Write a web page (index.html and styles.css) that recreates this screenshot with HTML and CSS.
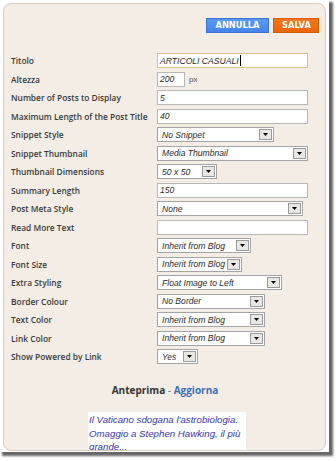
FILE: index.html
```html
<!DOCTYPE html>
<html>
<head>
<meta charset="utf-8">
<link rel="stylesheet" href="styles.css">
</head>
<body>
<div class="shot">
  <div class="panel">
    <div class="actions">
      <button class="btn btn-blue">ANNULLA</button>
      <button class="btn btn-orange">SALVA</button>
    </div>
    <div class="form">
      <label class="lbl">Titolo</label>
      <div class="ctl"><span class="input w-full focus">ARTICOLI CASUALI<span class="caret"></span></span></div>

      <label class="lbl">Altezza</label>
      <div class="ctl"><span class="input w-28">200</span><span class="unit">px</span></div>

      <label class="lbl">Number of Posts to Display</label>
      <div class="ctl"><span class="input w-full">5</span></div>

      <label class="lbl">Maximum Length of the Post Title</label>
      <div class="ctl"><span class="input w-full">40</span></div>

      <label class="lbl">Snippet Style</label>
      <div class="ctl"><span class="select w-117"><span class="val">No Snippet</span><span class="drop"><svg width="5" height="3" viewBox="0 0 5 3"><path d="M0 0H5L2.5 3Z" fill="#000"/></svg></span></span></div>

      <label class="lbl">Snippet Thumbnail</label>
      <div class="ctl"><span class="select w-full"><span class="val">Media Thumbnail</span><span class="drop"><svg width="5" height="3" viewBox="0 0 5 3"><path d="M0 0H5L2.5 3Z" fill="#000"/></svg></span></span></div>

      <label class="lbl">Thumbnail Dimensions</label>
      <div class="ctl"><span class="select w-60"><span class="val">50 x 50</span><span class="drop"><svg width="5" height="3" viewBox="0 0 5 3"><path d="M0 0H5L2.5 3Z" fill="#000"/></svg></span></span></div>

      <label class="lbl">Summary Length</label>
      <div class="ctl"><span class="input w-full">150</span></div>

      <label class="lbl">Post Meta Style</label>
      <div class="ctl"><span class="select w-146"><span class="val">None</span><span class="drop"><svg width="5" height="3" viewBox="0 0 5 3"><path d="M0 0H5L2.5 3Z" fill="#000"/></svg></span></span></div>

      <label class="lbl">Read More Text</label>
      <div class="ctl"><span class="input w-full"></span></div>

      <label class="lbl">Font</label>
      <div class="ctl"><span class="select w-94"><span class="val">Inherit from Blog</span><span class="drop"><svg width="5" height="3" viewBox="0 0 5 3"><path d="M0 0H5L2.5 3Z" fill="#000"/></svg></span></span></div>

      <label class="lbl">Font Size</label>
      <div class="ctl"><span class="select w-85"><span class="val">Inherit from Blog</span><span class="drop"><svg width="5" height="3" viewBox="0 0 5 3"><path d="M0 0H5L2.5 3Z" fill="#000"/></svg></span></span></div>

      <label class="lbl">Extra Styling</label>
      <div class="ctl"><span class="select w-125"><span class="val">Float Image to Left</span><span class="drop"><svg width="5" height="3" viewBox="0 0 5 3"><path d="M0 0H5L2.5 3Z" fill="#000"/></svg></span></span></div>

      <label class="lbl">Border Colour</label>
      <div class="ctl"><span class="select w-108"><span class="val">No Border</span><span class="drop"><svg width="5" height="3" viewBox="0 0 5 3"><path d="M0 0H5L2.5 3Z" fill="#000"/></svg></span></span></div>

      <label class="lbl">Text Color</label>
      <div class="ctl"><span class="select w-108"><span class="val">Inherit from Blog</span><span class="drop"><svg width="5" height="3" viewBox="0 0 5 3"><path d="M0 0H5L2.5 3Z" fill="#000"/></svg></span></span></div>

      <label class="lbl">Link Color</label>
      <div class="ctl"><span class="select w-108"><span class="val">Inherit from Blog</span><span class="drop"><svg width="5" height="3" viewBox="0 0 5 3"><path d="M0 0H5L2.5 3Z" fill="#000"/></svg></span></span></div>

      <label class="lbl">Show Powered by Link</label>
      <div class="ctl"><span class="select w-41"><span class="val">Yes</span><span class="drop"><svg width="5" height="3" viewBox="0 0 5 3"><path d="M0 0H5L2.5 3Z" fill="#000"/></svg></span></span></div>
    </div>

    <div class="preview-head"><span class="ph-title">Anteprima</span><span class="ph-sep"> - </span><a class="ph-link">Aggiorna</a></div>
    <div class="preview">
      <p class="preview-text">Il Vaticano sdogana l'astrobiologia. Omaggio a Stephen Hawking, il più grande...</p>
    </div>
  </div>
</div>
</body>
</html>
```

FILE: styles.css
```css
* { box-sizing: border-box; margin: 0; padding: 0; }
html, body { background: #ffffff; }
body {
  width: 336px;
  height: 461px;
  overflow: hidden;
  font-family: "Open Sans", "DejaVu Sans", sans-serif;
}

.shot {
  width: 329px;
  height: 452px;
  background: #ffffff;
  padding: 3px 3px 1px 3px;
  box-shadow: 3px 3px 2px 1px rgba(0, 0, 0, 0.6);
}

.panel {
  height: 100%;
  background: #f4ede5;
  border: 1px solid #d6cec2;
  border-radius: 8px;
  overflow: hidden;
  padding: 14px 6px 0 7px;
}

.actions {
  display: flex;
  justify-content: flex-end;
  gap: 4px;
  height: 15px;
}

.btn {
  height: 15px;
  border: 1px solid;
  color: #ffffff;
  font-family: "DejaVu Sans", sans-serif;
  font-weight: bold;
  font-size: 8.3px;
  line-height: 13px;
  padding: 0 8px;
}
.btn-blue {
  width: 63px;
  background: linear-gradient(#5a9af4, #4685ea);
  border-color: #3a72d2;
}
.btn-orange {
  width: 46px;
  background: linear-gradient(#f5771a, #ec650a);
  border-color: #d65a00;
}

.form {
  margin-top: 18.5px;
  display: grid;
  grid-template-columns: 146px 1fr;
  grid-auto-rows: 18.5px;
  align-items: center;
}

.lbl {
  font-weight: 600;
  font-size: 8.4px;
  color: #3a3a3a;
  white-space: nowrap;
}

.ctl {
  display: flex;
  align-items: center;
}

.input, .select {
  height: 15px;
  background: #ffffff;
  display: flex;
  align-items: center;
  font-family: "Liberation Sans", Arial, sans-serif;
  font-style: italic;
  font-size: 8.6px;
  color: #2a2a2a;
  white-space: nowrap;
  overflow: hidden;
}

.input {
  border: 1px solid #b8b8b8;
  padding-left: 2px;
}
.input.focus { border-color: #d9bf85; }

.caret {
  display: inline-block;
  width: 1px;
  height: 11px;
  background: #000;
  margin-left: 1px;
}

.unit {
  margin-left: 4px;
  font-family: "Liberation Sans", Arial, sans-serif;
  font-size: 8px;
  color: #555;
}

.select {
  border: 1px solid #a4a4a4;
  padding-left: 4px;
  padding-right: 1px;
}
.select .val { flex: 1; overflow: hidden; }
.drop {
  width: 13px;
  height: 11px;
  flex: none;
  background: #e9e7e3;
  border: 1px solid #9a9a9a;
  display: flex;
  align-items: center;
  justify-content: center;
}

.w-full { width: 151px; }
.w-28 { width: 28px; }
.w-117 { width: 117px; }
.w-60 { width: 60px; }
.w-146 { width: 146px; }
.w-94 { width: 94px; }
.w-85 { width: 85px; }
.w-125 { width: 125px; }
.w-108 { width: 108px; }
.w-41 { width: 41px; }

.preview-head {
  margin-top: 18px;
  text-align: center;
  font-weight: bold;
  font-size: 10px;
  line-height: 13px;
  color: #333333;
}
.ph-sep { color: #666; font-weight: normal; }
.ph-link { color: #3a6dbd; }

.preview {
  margin: 15px 0 0 77px;
  width: 158px;
  background: #ffffff;
  padding: 1px 0 0 1px;
}
.preview-text {
  font-family: "Liberation Sans", Arial, sans-serif;
  font-style: italic;
  font-size: 9.7px;
  line-height: 13.5px;
  color: #3636b6;
}
```
